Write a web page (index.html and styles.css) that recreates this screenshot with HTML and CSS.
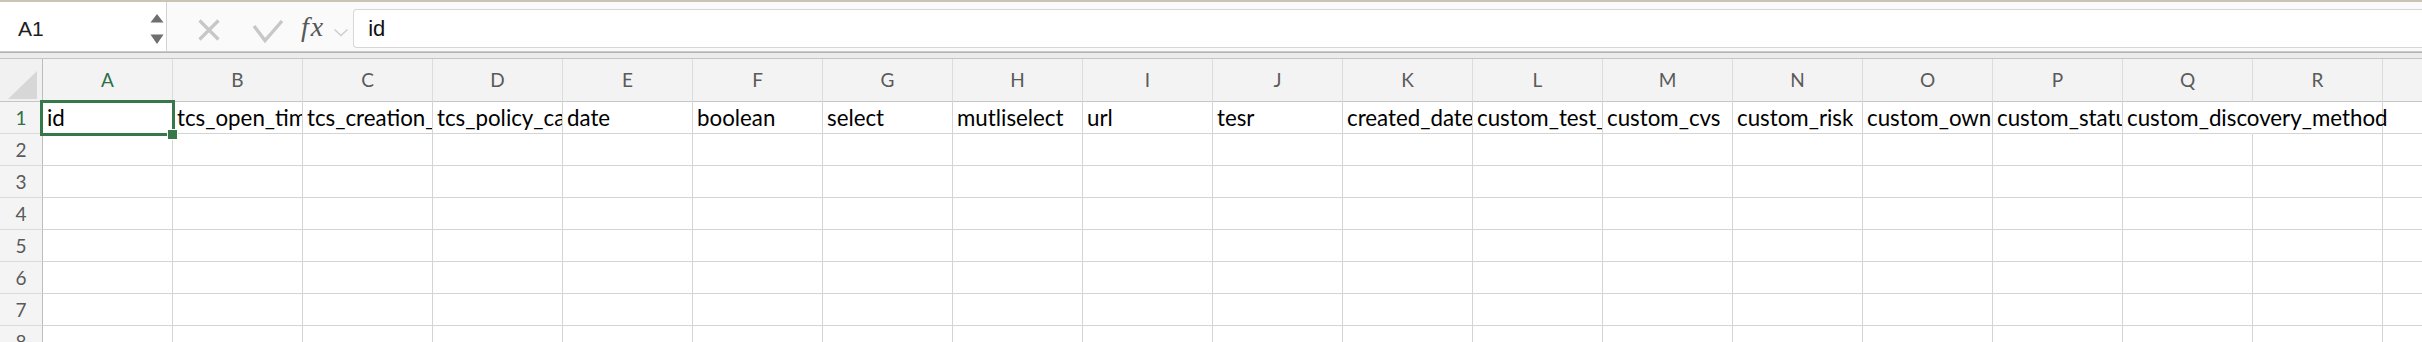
FILE: index.html
```html
<!DOCTYPE html>
<html>
<head>
<meta charset="utf-8">
<link rel="stylesheet" href="styles.css">
</head>
<body>
<div class="formula-bar">
  <div class="name-box">
    <span class="name-text">A1</span>
    <svg class="spinner" width="14" height="32" viewBox="0 0 14 32"><polygon points="7,1 13.5,9.5 0.5,9.5" fill="#6f6f6f"/><polygon points="0.5,21.5 13.5,21.5 7,31" fill="#6f6f6f"/></svg>
  </div>
  <svg class="ico-x" width="24" height="24" viewBox="0 0 24 24"><path d="M2.5 2.5 L21.5 21.5 M21.5 2.5 L2.5 21.5" stroke="#c7c7c7" stroke-width="3.2" fill="none"/></svg>
  <svg class="ico-check" width="32" height="26" viewBox="0 0 32 26"><polyline points="2,8 13,22.5 30,3" stroke="#c7c7c7" stroke-width="3.4" fill="none"/></svg>
  <span class="fx">fx</span>
  <svg class="ico-chev" width="16" height="10" viewBox="0 0 16 10"><polyline points="1.5,1.5 8,7.5 14.5,1.5" stroke="#cfcfcf" stroke-width="1.6" fill="none"/></svg>
  <div class="formula-input">id</div>
</div>
<div class="sep"></div>
<div class="sheet">
  <div class="corner"><div class="tri"></div></div>
  <div class="ch sel">A</div><div class="ch">B</div><div class="ch">C</div><div class="ch">D</div><div class="ch">E</div><div class="ch">F</div><div class="ch">G</div><div class="ch">H</div><div class="ch">I</div><div class="ch">J</div><div class="ch">K</div><div class="ch">L</div><div class="ch">M</div><div class="ch">N</div><div class="ch">O</div><div class="ch">P</div><div class="ch">Q</div><div class="ch">R</div><div class="ch">S</div>

  <div class="rh sel">1</div>
  <div class="c a1">id<div class="selbox"></div><div class="handle"></div></div><div class="c">tcs_open_time</div><div class="c">tcs_creation_time</div><div class="c">tcs_policy_category</div><div class="c">date</div><div class="c">boolean</div><div class="c">select</div><div class="c">mutliselect</div><div class="c">url</div><div class="c">tesr</div><div class="c">created_date</div><div class="c">custom_test_field</div><div class="c">custom_cvs</div><div class="c">custom_risk</div><div class="c">custom_owner</div><div class="c">custom_status</div><div class="c over">custom_discovery_method</div><div class="c"></div><div class="c"></div>

  <div class="rh">2</div>
  <div class="c"></div><div class="c"></div><div class="c"></div><div class="c"></div><div class="c"></div><div class="c"></div><div class="c"></div><div class="c"></div><div class="c"></div><div class="c"></div><div class="c"></div><div class="c"></div><div class="c"></div><div class="c"></div><div class="c"></div><div class="c"></div><div class="c"></div><div class="c"></div><div class="c"></div>

  <div class="rh">3</div>
  <div class="c"></div><div class="c"></div><div class="c"></div><div class="c"></div><div class="c"></div><div class="c"></div><div class="c"></div><div class="c"></div><div class="c"></div><div class="c"></div><div class="c"></div><div class="c"></div><div class="c"></div><div class="c"></div><div class="c"></div><div class="c"></div><div class="c"></div><div class="c"></div><div class="c"></div>

  <div class="rh">4</div>
  <div class="c"></div><div class="c"></div><div class="c"></div><div class="c"></div><div class="c"></div><div class="c"></div><div class="c"></div><div class="c"></div><div class="c"></div><div class="c"></div><div class="c"></div><div class="c"></div><div class="c"></div><div class="c"></div><div class="c"></div><div class="c"></div><div class="c"></div><div class="c"></div><div class="c"></div>

  <div class="rh">5</div>
  <div class="c"></div><div class="c"></div><div class="c"></div><div class="c"></div><div class="c"></div><div class="c"></div><div class="c"></div><div class="c"></div><div class="c"></div><div class="c"></div><div class="c"></div><div class="c"></div><div class="c"></div><div class="c"></div><div class="c"></div><div class="c"></div><div class="c"></div><div class="c"></div><div class="c"></div>

  <div class="rh">6</div>
  <div class="c"></div><div class="c"></div><div class="c"></div><div class="c"></div><div class="c"></div><div class="c"></div><div class="c"></div><div class="c"></div><div class="c"></div><div class="c"></div><div class="c"></div><div class="c"></div><div class="c"></div><div class="c"></div><div class="c"></div><div class="c"></div><div class="c"></div><div class="c"></div><div class="c"></div>

  <div class="rh">7</div>
  <div class="c"></div><div class="c"></div><div class="c"></div><div class="c"></div><div class="c"></div><div class="c"></div><div class="c"></div><div class="c"></div><div class="c"></div><div class="c"></div><div class="c"></div><div class="c"></div><div class="c"></div><div class="c"></div><div class="c"></div><div class="c"></div><div class="c"></div><div class="c"></div><div class="c"></div>

  <div class="rh">8</div>
  <div class="c"></div><div class="c"></div><div class="c"></div><div class="c"></div><div class="c"></div><div class="c"></div><div class="c"></div><div class="c"></div><div class="c"></div><div class="c"></div><div class="c"></div><div class="c"></div><div class="c"></div><div class="c"></div><div class="c"></div><div class="c"></div><div class="c"></div><div class="c"></div><div class="c"></div>
</div>
</body>
</html>
```

FILE: styles.css
```css
body {
  margin: 0;
  width: 2422px;
  height: 342px;
  overflow: hidden;
  background: #ffffff;
  font-family: "Lato", "Liberation Sans", sans-serif;
}

.formula-bar {
  display: flex;
  align-items: flex-start;
  height: 52px;
  box-sizing: border-box;
  border-top: 2px solid #c9c4b5;
  border-bottom: 1px solid #cbcbcb;
  background: #fafafa;
}

.name-box {
  width: 167px;
  flex: none;
  height: 49px;
  box-sizing: border-box;
  border-right: 1px solid #d3d3d3;
  background: #ffffff;
  display: flex;
  align-items: center;
  padding-left: 18px;
  padding-right: 2px;
}

.name-text {
  font-family: "Liberation Sans", Arial, sans-serif;
  font-size: 21px;
  color: #1e1e1e;
  padding-top: 4px;
}

.spinner {
  margin-left: auto;
  margin-top: 4px;
}

.ico-x {
  flex: none;
  margin-left: 30px;
  margin-top: 16px;
}

.ico-check {
  flex: none;
  margin-left: 31px;
  margin-top: 16px;
}

.fx {
  flex: none;
  margin-left: 17px;
  margin-top: 10px;
  font-family: "Liberation Serif", serif;
  font-style: italic;
  font-size: 28px;
  letter-spacing: 2px;
  color: #575757;
  line-height: 30px;
}

.ico-chev {
  flex: none;
  margin-left: 8px;
  margin-top: 26px;
}

.formula-input {
  flex: 1;
  margin-left: 4px;
  margin-top: 7px;
  height: 39px;
  box-sizing: border-box;
  border: 1px solid #d6d6d6;
  border-right: none;
  border-radius: 4px 0 0 4px;
  background: #ffffff;
  padding-left: 14px;
  padding-top: 1px;
  font-family: "Liberation Sans", Arial, sans-serif;
  font-size: 22px;
  line-height: 36px;
  color: #111111;
}

.sep {
  height: 7px;
  box-sizing: border-box;
  border-top: 1px solid #b3b3b3;
  border-bottom: 1px solid #c4c4c4;
  background: #ececec;
}

.sheet {
  display: grid;
  grid-template-columns: 43px repeat(19, 130px);
  grid-template-rows: 43px repeat(8, 32px);
  width: 2513px;
}

.corner {
  background: #f1f1f1;
  border-right: 1px solid #bdbdbd;
  border-bottom: 1px solid #c6c6c6;
  position: relative;
}

.tri {
  position: absolute;
  left: 8px;
  top: 12px;
  width: 29px;
  height: 28px;
  background: #d7d7d7;
  clip-path: polygon(100% 0, 100% 100%, 0 100%);
}

.ch {
  background: #f3f3f3;
  border-right: 1px solid #dcdcdc;
  border-bottom: 1px solid #c6c6c6;
  text-align: center;
  font-size: 19px;
  line-height: 42px;
  color: #5a5a5a;
}

.rh {
  background: #f4f4f4;
  border-right: 1px solid #bdbdbd;
  border-bottom: 1px solid #dadada;
  text-align: center;
  font-size: 19px;
  line-height: 31px;
  color: #5a5a5a;
}

.ch.sel,
.rh.sel {
  color: #2f7046;
}

.c {
  border-right: 1px solid #d4d4d4;
  border-bottom: 1px solid #d4d4d4;
  padding-left: 4px;
  font-size: 22.3px;
  line-height: 31px;
  color: #000000;
  white-space: nowrap;
  overflow: hidden;
}

.c.over {
  overflow: visible;
  border-right-color: transparent;
  position: relative;
  z-index: 1;
}

.c.a1 {
  overflow: visible;
  position: relative;
}

.selbox {
  position: absolute;
  left: -3px;
  top: -2px;
  right: -3px;
  bottom: -3px;
  border: 3px solid #37784b;
  z-index: 2;
}

.handle {
  position: absolute;
  left: 125px;
  top: 28px;
  width: 9px;
  height: 9px;
  background: #37784b;
  box-shadow: 0 0 0 1px #ffffff;
  z-index: 3;
}
```
